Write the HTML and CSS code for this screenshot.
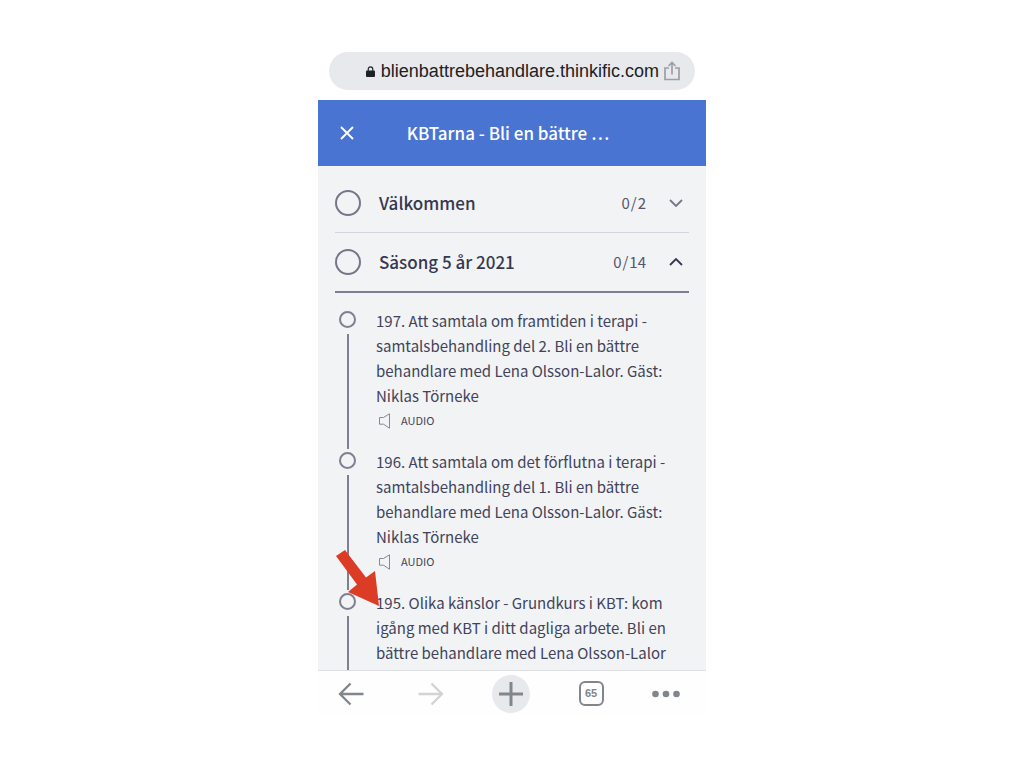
FILE: index.html
```html
<!DOCTYPE html>
<html lang="sv">
<head>
  <meta charset="utf-8">
  <meta name="viewport" content="width=device-width, initial-scale=1">
  <title>KBTarna - Bli en bättre behandlare</title>
  <link rel="stylesheet" href="styles.css">
</head>
<body>
  <div class="phone">
    <div class="address-bar">
      <svg class="lock-icon" viewBox="0 0 10 12">
        <path d="M1 5h8q1 0 1 1v5q0 1-1 1H1q-1 0-1-1V6q0-1 1-1z" fill="#202124"/>
        <path d="M2.5 5.500V3.300a2.500 2.500 0 0 1 5 0v2.200" fill="none" stroke="#202124" stroke-width="1.300"/>
      </svg>
      <span class="address">blienbattrebehandlare.thinkific.com</span>
      <button class="icon-button share-button" aria-label="Dela">
        <svg width="16" height="20" viewBox="0 0 16 20" fill="none" stroke="#9aa0a6" stroke-width="1.700">
          <path d="M5 7H1v11.500h14V7h-4M8 13.500V1.500M4.500 5L8 1.500 11.500 5"/>
        </svg>
      </button>
    </div>

    <header class="course-header">
      <button class="icon-button close-button" aria-label="Stäng">
        <svg width="14" height="14" viewBox="0 0 14 14" fill="none" stroke="#fff" stroke-width="1.900">
          <path d="M1 1l12 12M13 1L1 13"/>
        </svg>
      </button>
      <h1 class="course-title">KBTarna - Bli en bättre …</h1>
    </header>

    <main class="course">
      <button class="chapter" aria-expanded="false">
        <span class="chapter-circle"></span>
        <span class="chapter-title">Välkommen</span>
        <span class="chapter-count">0<span class="slash">/</span>2</span>
        <svg class="chevron" viewBox="0 0 14 8"><path d="M1 1l6 6 6-6"/></svg>
      </button>
      <button class="chapter chapter-open" aria-expanded="true">
        <span class="chapter-circle"></span>
        <span class="chapter-title">Säsong 5 år 2021</span>
        <span class="chapter-count">0<span class="slash">/</span>14</span>
        <svg class="chevron" viewBox="0 0 14 8"><path d="M1 7l6-6 6 6"/></svg>
      </button>

      <ul class="lessons">
        <li class="lesson">
          <div class="lesson-track"><span class="lesson-circle"></span><span class="lesson-line"></span></div>
          <div class="lesson-body">
            <a class="lesson-link" href="#">197. Att samtala om framtiden i terapi - samtalsbehandling del 2. Bli en bättre behandlare med Lena Olsson-Lalor. Gäst: Niklas Törneke</a>
            <div class="lesson-type">
              <svg class="audio-icon" viewBox="0 0 12 16"><path d="M.5 4.500h4L10.500.8v14.400l-6-4h-4z"/></svg>
              AUDIO
            </div>
          </div>
        </li>
        <li class="lesson">
          <div class="lesson-track"><span class="lesson-circle"></span><span class="lesson-line"></span></div>
          <div class="lesson-body">
            <a class="lesson-link" href="#">196. Att samtala om det förflutna i terapi - samtalsbehandling del 1. Bli en bättre behandlare med Lena Olsson-Lalor. Gäst: Niklas Törneke</a>
            <div class="lesson-type">
              <svg class="audio-icon" viewBox="0 0 12 16"><path d="M.5 4.500h4L10.500.8v14.400l-6-4h-4z"/></svg>
              AUDIO
            </div>
          </div>
        </li>
        <li class="lesson">
          <div class="lesson-track"><span class="lesson-circle"></span><span class="lesson-line"></span></div>
          <div class="lesson-body">
            <a class="lesson-link" href="#">195. Olika känslor - Grundkurs i KBT: kom igång med KBT i ditt dagliga arbete. Bli en bättre behandlare med Lena Olsson-Lalor</a>
            <div class="lesson-type">
              <svg class="audio-icon" viewBox="0 0 12 16"><path d="M.5 4.500h4L10.500.8v14.400l-6-4h-4z"/></svg>
            </div>
          </div>
          <svg class="pointer" viewBox="0 0 44 56">
            <path d="M1 6l9-6 21 27.500 9-6.500 4 35-31-14 9-7.500z" fill="#dc3c26"/>
          </svg>
        </li>
      </ul>
    </main>

    <nav class="toolbar">
      <button class="icon-button" aria-label="Bakåt">
        <svg width="26" height="24" viewBox="0 0 26 24" fill="none" stroke="#80868b" stroke-width="2.300">
          <path d="M25.500 12H2M12.500 1.500L2 12l10.500 10.500"/>
        </svg>
      </button>
      <button class="icon-button" aria-label="Framåt" disabled>
        <svg width="26" height="24" viewBox="0 0 26 24" fill="none" stroke="#d2d3d5" stroke-width="2.300">
          <path d="M.5 12H24M13.500 1.500L24 12 13.500 22.500"/>
        </svg>
      </button>
      <button class="icon-button new-tab" aria-label="Ny flik">
        <svg width="26" height="26" viewBox="0 0 26 26" fill="none" stroke="#80868b" stroke-width="3">
          <path d="M1 13h24M13 1v24"/>
        </svg>
      </button>
      <button class="icon-button" aria-label="Flikar"><span class="tab-count">65</span></button>
      <button class="icon-button menu-button" aria-label="Meny">
        <svg width="28" height="8" viewBox="0 0 28 8" fill="#80868b">
          <circle cx="3.500" cy="4" r="3.300"/><circle cx="14" cy="4" r="3.300"/><circle cx="24.500" cy="4" r="3.300"/>
        </svg>
      </button>
    </nav>
  </div>
</body>
</html>
```

FILE: styles.css
```css
* {
  box-sizing: border-box;
}

body {
  margin: 0;
  height: 100vh;
  padding: 52px 16px 54px;
  background-color: #fff;
  font-family: "Noto Sans CJK SC", "Noto Sans", sans-serif;
  color: #42435a;
}

button {
  font-family: inherit;
  color: inherit;
  background: none;
  border: none;
  padding: 0;
  cursor: pointer;
}

svg {
  display: block;
  flex-shrink: 0;
}

.icon-button {
  display: flex;
  align-items: center;
  justify-content: center;
}

.phone {
  display: flex;
  flex-direction: column;
  max-width: 388px;
  height: 100%;
  margin: 0 auto;
}

.address-bar {
  display: flex;
  align-items: center;
  justify-content: flex-end;
  height: 38px;
  flex-shrink: 0;
  margin: 0 11px 10px;
  padding: 0 15px;
  border-radius: 19px;
  background-color: #e8e9ed;
}

.lock-icon {
  width: 9px;
  height: 11px;
  margin-right: 6px;
}

.address {
  font-family: "Liberation Sans", Arial, sans-serif;
  font-size: 18px;
  line-height: 24px;
  color: #202124;
}

.share-button {
  margin-left: 5px;
}

.course-header {
  display: flex;
  align-items: center;
  height: 66px;
  flex-shrink: 0;
  padding: 0 22px;
  background-color: #4974d1;
  color: #fff;
}

.course-title {
  flex: 1;
  margin: 0 22px 0 0;
  font-size: 17px;
  font-weight: 500;
  line-height: 24px;
  text-align: center;
}

.course {
  flex: 1;
  min-height: 0;
  overflow: hidden;
  padding: 7px 17px 0;
  background-color: #f1f3f5;
}

.chapter {
  display: flex;
  align-items: center;
  width: 100%;
  height: 60px;
  padding-right: 6px;
  border-bottom: 1px solid #d3d4df;
  color: #363850;
}

.chapter-open {
  border-bottom: 2px solid #7e8092;
}

.chapter-circle {
  width: 26px;
  height: 26px;
  margin-right: 18px;
  border: 2px solid #757688;
  border-radius: 50%;
}

.chapter-title {
  flex: 1;
  font-size: 17px;
  font-weight: 500;
  line-height: 24px;
  text-align: left;
}

.chapter-count {
  font-size: 15px;
  line-height: 24px;
  color: #55566a;
}

.slash {
  margin: 0 1px;
}

.chevron {
  width: 14px;
  height: 8px;
  margin-left: 23px;
  fill: none;
  stroke: #757688;
  stroke-width: 1.8;
}

.chapter-open .chevron {
  stroke: #363850;
}

.lessons {
  list-style: none;
  margin: 0;
  padding: 15px 4px 0;
}

.lesson {
  position: relative;
  display: flex;
}

.lesson-track {
  display: flex;
  flex-direction: column;
  align-items: center;
  width: 17px;
  margin-right: 20px;
  padding-top: 3px;
}

.lesson-circle {
  width: 17px;
  height: 17px;
  margin-bottom: 6px;
  border: 2px solid #7e8092;
  border-radius: 50%;
}

.lesson-line {
  flex: 1;
  width: 2px;
  background-color: #7e8092;
}

.lesson-body {
  flex: 1;
  padding-bottom: 16px;
}

.lesson-link {
  display: block;
  font-size: 15px;
  line-height: 25px;
  color: inherit;
  text-decoration: none;
}

.lesson-type {
  display: flex;
  align-items: center;
  min-height: 25px;
  padding-left: 3px;
  font-size: 11px;
  line-height: 25px;
}

.audio-icon {
  width: 12px;
  height: 16px;
  margin-right: 10px;
  fill: none;
  stroke: #85869a;
  stroke-width: 1;
}

/* red arrow laid over the lesson list */
.pointer {
  position: absolute;
  top: -40px;
  left: -4px;
  width: 44px;
  height: 56px;
}

.toolbar {
  display: flex;
  align-items: center;
  justify-content: space-between;
  flex-shrink: 0;
  height: 44px;
  padding: 2px 26px 0 14px;
  border-top: 1px solid #dcdee2;
  background-color: #fefefe;
}

.toolbar .icon-button {
  width: 38px;
  height: 38px;
}

.toolbar .menu-button {
  width: 28px;
}

.new-tab {
  border-radius: 50%;
  background-color: #e8e9ed;
}

.tab-count {
  width: 25px;
  height: 25px;
  border: 2px solid #80868b;
  border-radius: 6px;
  font-family: "Liberation Sans", sans-serif;
  font-size: 11px;
  font-weight: bold;
  line-height: 21px;
  color: #80868b;
}
```
